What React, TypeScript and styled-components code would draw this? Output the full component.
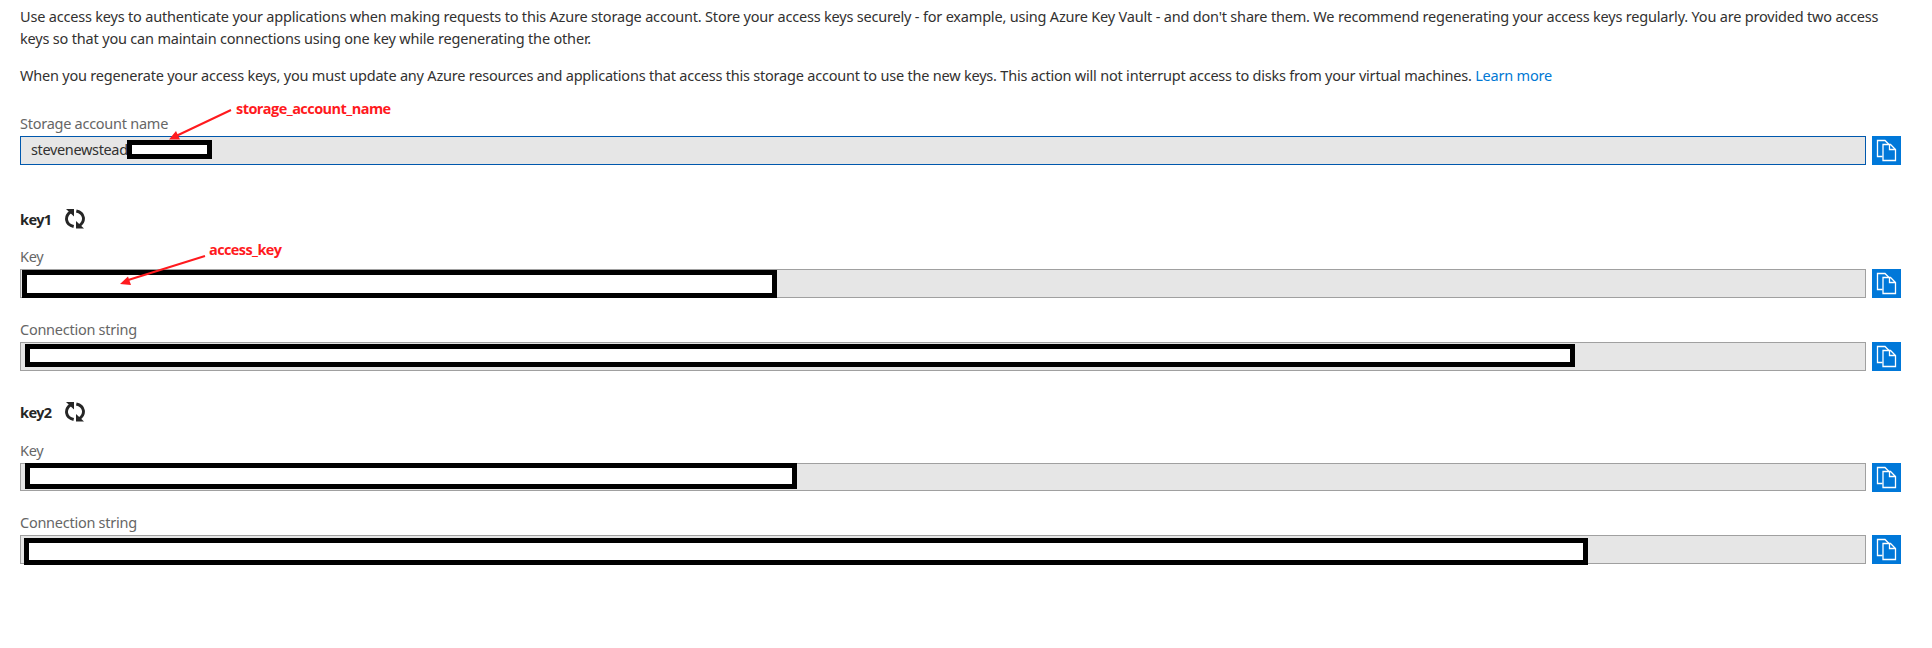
import React from 'react';
import styled, { createGlobalStyle } from 'styled-components';

const GlobalStyle = createGlobalStyle`
  body { margin: 0; background: #fff; }
  * { box-sizing: border-box; }
`;

const Page = styled.main`
  position: relative;
  width: 1932px;
  height: 648px;
  padding: 5px 31px 0 20px;
  overflow: hidden;
  background: #fff;
  color: #323130;
  font: 14.5px/22px 'Noto Sans', 'Open Sans', sans-serif;
`;

const Paragraph = styled.p`
  margin: 0 0 15px;
`;

const Line = styled.span<{ $spacing: number }>`
  display: block;
  width: max-content;
  white-space: nowrap;
  letter-spacing: ${p => p.$spacing}px;
`;

const Link = styled.a`
  color: #0078d4;
  text-decoration: none;
`;

const Field = styled.div<{ $gap: number }>`
  margin-top: ${p => p.$gap}px;
`;

const Label = styled.label<{ $spacing: number }>`
  display: block;
  width: max-content;
  height: 22px;
  margin-bottom: 2px;
  color: #666;
  letter-spacing: ${p => p.$spacing}px;
`;

const FieldRow = styled.div`
  display: flex;
  gap: 6px;
  height: 29px;
`;

const ValueBox = styled.div<{ $active?: boolean; $height?: number }>`
  position: relative;
  width: 1846px;
  height: ${p => p.$height ?? 29}px;
  padding: 1px 10px;
  border: 1px solid ${p => (p.$active ? '#0058ad' : '#a0a0a0')};
  background: #e6e6e6;
`;

const Value = styled.span`
  letter-spacing: -0.35px;
`;

const Redaction = styled.span<{ $x: number; $y: number; $w: number; $h: number }>`
  position: absolute;
  left: ${p => p.$x - 1}px;
  top: ${p => p.$y - 1}px;
  width: ${p => p.$w}px;
  height: ${p => p.$h}px;
  border: 5px solid #000;
  background: #fff;
`;

const CopyButton = styled.button`
  display: block;
  width: 29px;
  height: 29px;
  padding: 0;
  border: 0;
  background: #0078d9;
  svg { display: block; }
`;

const KeyHeading = styled.h2<{ $gap: number }>`
  display: flex;
  align-items: center;
  height: 22px;
  margin: ${p => p.$gap}px 0 0;
  font-size: 14.5px;
  font-weight: 700;
  color: #262626;
  span { width: 45px; letter-spacing: -0.6px; }
`;

const Overlay = styled.svg`
  position: absolute;
  left: 0;
  top: 0;
  pointer-events: none;
`;

const Note = styled.span<{ $x: number; $y: number; $spacing: number }>`
  position: absolute;
  left: ${p => p.$x}px;
  top: ${p => p.$y}px;
  color: #ff1a1e;
  font-family: 'Open Sans', sans-serif;
  font-weight: 700;
  white-space: nowrap;
  letter-spacing: ${p => p.$spacing}px;
`;

const CopyIcon = () => (
  <svg width="29" height="29" viewBox="0 0 29 29" fill="none" stroke="#fff" strokeWidth="1.3">
    <path d="M10.5 20.5H5.5V4.5h7.5l4 4" />
    <path d="M11 8.5h7.5l5 5v11H11zM17.5 8.5v5h6" />
  </svg>
);

const RefreshIcon = () => (
  <svg width="20" height="20" viewBox="0 0 20 20">
    <g fill="none" stroke="#262626" strokeWidth="2.9">
      <path d="M8.7 17.5C0 15.5 -.5 7 5.7 2.8" />
      <path d="M11.3 2C20 4 20.5 12.5 14.3 16.7" />
    </g>
    <path d="M1 0h8v7.5zM19 19.5h-8v-7.5z" fill="#262626" />
  </svg>
);

type FieldProps = {
  label: string;
  spacing: number;
  gap: number;
  value?: string;
  active?: boolean;
  height?: number;
  mask: [number, number, number, number];
};

const CopyField = ({ label, spacing, gap, value, active, height, mask }: FieldProps) => (
  <Field $gap={gap}>
    <Label $spacing={spacing}>{label}</Label>
    <FieldRow>
      <ValueBox $active={active} $height={height}>
        {value && <Value>{value}</Value>}
        <Redaction $x={mask[0]} $y={mask[1]} $w={mask[2]} $h={mask[3]} />
      </ValueBox>
      <CopyButton aria-label="Copy"><CopyIcon /></CopyButton>
    </FieldRow>
  </Field>
);

export default function App() {
  return (
    <>
      <GlobalStyle />
      <Page>
        <Paragraph>
          <Line $spacing={-0.193}>Use access keys to authenticate your applications when making requests to this Azure storage account. Store your access keys securely - for example, using Azure Key Vault - and don't share them. We recommend regenerating your access keys regularly. You are provided two access</Line>
          <Line $spacing={-0.184}>keys so that you can maintain connections using one key while regenerating the other.</Line>
        </Paragraph>
        <Paragraph>
          <Line $spacing={-0.21}>When you regenerate your access keys, you must update any Azure resources and applications that access this storage account to use the new keys. This action will not interrupt access to disks from your virtual machines. <Link>Learn more</Link></Line>
        </Paragraph>
        <CopyField label="Storage account name" spacing={-0.26} gap={26} value="stevenewstead" active mask={[107, 4, 85, 19]} />
        <KeyHeading $gap={43}><span>key1</span><RefreshIcon /></KeyHeading>
        <CopyField label="Key" spacing={-0.26} gap={15} mask={[2, 1, 755, 28]} />
        <CopyField label="Connection string" spacing={-0.26} gap={20} mask={[5, 2, 1550, 23]} />
        <KeyHeading $gap={30}><span>key2</span><RefreshIcon /></KeyHeading>
        <CopyField label="Key" spacing={-0.26} gap={16} height={28} mask={[5, 0, 772, 26]} />
        <CopyField label="Connection string" spacing={-0.26} gap={19} mask={[4, 3, 1564, 27]} />
        <Overlay width="400" height="300" stroke="#ff1a1e" fill="#ff1a1e">
          <path d="M231 110L174 137M205 256L125 281" strokeWidth="2" />
          <path d="M169 139.5L176 131L180 139.5zM120 284L128 276.5L131 285z" stroke="none" />
        </Overlay>
        <Note $x={236} $y={98} $spacing={-0.55}>storage_account_name</Note>
        <Note $x={209} $y={239} $spacing={-0.6}>access_key</Note>
      </Page>
    </>
  );
}
